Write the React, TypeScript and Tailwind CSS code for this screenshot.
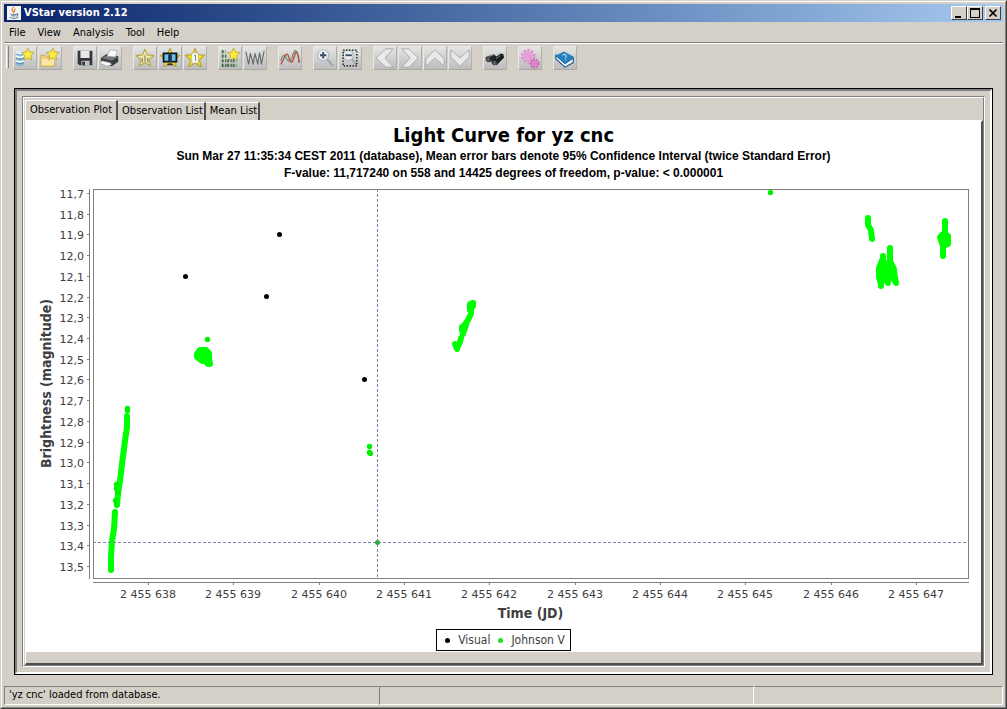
import { useState } from "react";
import type { ReactNode } from "react";

const STAR = "M12 1.5l3 6.800 7.500.700-5.600 5 1.700 7.500-6.600-4-6.600 4 1.700-7.500L1.500 9l7.500-.700z";

interface Tool {
  label: string;
  icon: ReactNode;
}

function Star({ x = 0, y = 0, size = 24, fill = "#fdee3c" }) {
  return (
    <svg x={x} y={y} width={size} height={size} viewBox="0 0 24 24">
      <path d={STAR} fill={fill} stroke="#b7a23a" strokeWidth="1.300" strokeLinejoin="round" />
    </svg>
  );
}

const toolGroups: Tool[][] = [
  [
    {
      label: "New star from database",
      icon: (
        <>
          <path d="M2 6h9v14q-4.500 2-9 0z" fill="#8fb9d2" />
          <ellipse cx="6.500" cy="6" rx="4.500" ry="1.800" fill="#dceef7" />
          <path d="M2 10q4.500 2.500 9 0M2 15q4.500 2.500 9 0" stroke="#f4fafd" strokeWidth="2" fill="none" />
          <path d="M2 12q4.500 2.500 9 0M2 17q4.500 2.500 9 0" stroke="#4e88ab" strokeWidth="1" fill="none" />
          <Star x={7} y={0} size={16} />
        </>
      ),
    },
    {
      label: "New star from file",
      icon: (
        <>
          <path d="M2 9h5l2 2h8v10H2z" fill="#f1cf79" stroke="#d5a94c" />
          <path d="M3 13h14l-1 7H3z" fill="#fbe6a6" />
          <Star x={7} y={0} size={16} />
        </>
      ),
    },
  ],
  [
    {
      label: "Save",
      icon: (
        <>
          <path d="M4 4h16v16H6l-2-2z" fill="#35353a" />
          <path d="M7 4h10v8H7z" fill="#e6e7ea" />
          <path d="M8 15h9v5H8z" fill="#bfc2c8" />
          <path d="M9 16h3v4H9z" fill="#35353a" />
        </>
      ),
    },
    {
      label: "Print",
      icon: (
        <>
          <path d="M2 12l6-4 13 2v6l-7 5-12-4z" fill="#3b3c40" />
          <path d="M3 12l6-3 11 2-6 4z" fill="#77787d" />
          <path d="M12 3l8 1-2 7-9-1z" fill="#fbfbfb" stroke="#9b9b9b" strokeWidth=".7" />
          <path d="M3 15l9 2 2 2-5 2-8-3z" fill="#f6f6f6" stroke="#777" strokeWidth=".5" />
        </>
      ),
    },
  ],
  [
    {
      label: "Raw data mode",
      icon: (
        <>
          <Star x={1} y={1} size={22} fill="#ece6b4" />
          <path d="M9 17v-5M12 16V9M15 17v-5" stroke="#8d8850" strokeWidth="1.300" />
        </>
      ),
    },
    {
      label: "Phase plot mode",
      icon: (
        <>
          <Star x={0} y={0} size={24} />
          <path d="M4 6h16v11H4z" fill="#10181f" />
          <path d="M6 8h12v7H6z" fill="#6fc0ee" />
          <path d="M10 15V9l2-2 2 2v6z" fill="#15334a" />
          <path d="M9 18h6v2H9z" fill="#333" />
        </>
      ),
    },
    {
      label: "Star info",
      icon: (
        <>
          <Star x={0} y={0} size={24} fill="#fbe800" />
          <path d="M8.500 6.500h7v11h-7z" fill="#fff" stroke="#aaa" strokeWidth=".7" />
          <path d="M11 9h1.500v6" stroke="#666" strokeWidth="1" fill="none" />
        </>
      ),
    },
  ],
  [
    {
      label: "Observation list",
      icon: (
        <>
          <path d="M3 5h4M3 10h6M3 15h16M3 20h16" stroke="#3f6b3d" strokeWidth="3.500" strokeDasharray="2 1.500 1.500 1" />
          <Star x={8} y={0} size={16} />
        </>
      ),
    },
    {
      label: "Light curve",
      icon: <path d="M2 5l3 14 2-12 3 12L12 7l3 12 2-13 2 13 3-15" stroke="#66686b" strokeWidth="1.200" fill="none" />,
    },
  ],
  [
    {
      label: "Polynomial fit",
      icon: (
        <>
          <path d="M2 15q3-10 6-3t6 0q3-11 5-7t3 12" stroke="#4f9e62" strokeWidth="1.300" fill="none" />
          <path d="M2 19q2-3 4-8t4-2q3 11 5 6t3-9q3-2 4 11" stroke="#c64141" strokeWidth="1.400" fill="none" />
        </>
      ),
    },
  ],
  [
    {
      label: "Zoom in",
      icon: (
        <>
          <path d="M14 13l7 8" stroke="#a0a2a7" strokeWidth="2" />
          <circle cx="10" cy="9" r="6" fill="#e8edf2" stroke="#b4b8be" strokeWidth="1.300" />
          <path d="M6.500 9h7M10 5.500v7" stroke="#3c4c5d" strokeWidth="2" />
        </>
      ),
    },
    {
      label: "Zoom to fit",
      icon: (
        <>
          <path d="M14 13l5 7" stroke="#a0a2a7" strokeWidth="2" />
          <circle cx="10" cy="9" r="5.500" fill="#e8edf2" stroke="#b4b8be" strokeWidth="1.300" />
          <path d="M7 9h7" stroke="#3c4c5d" strokeWidth="2" />
          <path d="M4.500 3.500h15v17h-15z" stroke="#000" strokeWidth="1.300" strokeDasharray="1.600 1.600" fill="none" />
        </>
      ),
    },
  ],
  [
    { label: "Pan left", icon: <path d="M13 2h8l-9 10 9 10h-8L2 12z" fill="#e9e9ea" stroke="#a6a6a8" /> },
    { label: "Pan right", icon: <path d="M11 2H3l9 10-9 10h8l10-10z" fill="#e9e9ea" stroke="#a6a6a8" /> },
    { label: "Pan up", icon: <path d="M2 13v8l10-9 10 9v-8L12 3z" fill="#e9e9ea" stroke="#a6a6a8" /> },
    { label: "Pan down", icon: <path d="M2 11V3l10 9 10-9v8l-10 10z" fill="#e9e9ea" stroke="#a6a6a8" /> },
  ],
  [
    {
      label: "Filter",
      icon: (
        <>
          <path d="M2 11l9-3 3 3-7 5-3 .5-2-2z" fill="#26272a" />
          <path d="M9 14l9-7 3 .5 1 4-8 8-4 .5-2-3z" fill="#1c1d1f" />
          <ellipse cx="4.500" cy="13.500" rx="2" ry="2.500" fill="#5a5c61" />
          <ellipse cx="11.500" cy="17.500" rx="2.500" ry="2.500" fill="#5a5c61" />
          <path d="M5 10.500l6-2M13 13l5-4" stroke="#808389" />
        </>
      ),
    },
  ],
  [
    {
      label: "Preferences",
      icon: (
        <>
          <circle cx="10" cy="10" r="6" fill="none" stroke="#e092d0" strokeWidth="4" strokeDasharray="2.400 1.400" />
          <circle cx="10" cy="10" r="5" fill="#e79fd8" />
          <circle cx="17" cy="18" r="4" fill="none" stroke="#cb5fb8" strokeWidth="3" strokeDasharray="1.800 1" />
          <circle cx="17" cy="18" r="3.500" fill="#dd82cb" />
        </>
      ),
    },
  ],
  [
    {
      label: "Help contents",
      icon: (
        <>
          <path d="M2 9l10 9 9-6v5l-9 5-10-9z" fill="#eef4f8" stroke="#1d5788" strokeWidth="1.200" />
          <path d="M2 9l9-4 11 6-10 7z" fill="#2581bd" />
          <path d="M9 9q3-2 4 0t-1 3M12 14h1" stroke="#a9d4ee" strokeWidth="1.300" fill="none" />
        </>
      ),
    },
  ],
];

// Plot geometry, measured from the top left corner of the plot area
const PLOT_W = 875;
const PLOT_H = 389;
const CROSS_X = 284;
const CROSS_Y = 353;

const magnitudes = Array.from({ length: 19 }, (_, i) => ({
  label: ((117 + i) / 10).toFixed(1).replace(".", ","),
  y: Math.round(4 + i * 20.72),
}));
const days = Array.from({ length: 10 }, (_, i) => ({
  label: `2 455 ${638 + i}`,
  x: Math.round(55 + i * 85.33),
}));

const visual = [[92, 87], [186, 45], [173, 107], [271, 190]];

const johnsonPoints = [
  [34, 219], [34, 221], [23, 295], [23, 299], [24, 303], [22, 311], [23, 315],
  [114, 150], [276, 257], [276, 263], [277, 264], [677, 3],
];

const johnsonRuns = [
  "34,227 34,238 32,252 29,275 27,292 25,305 24,316",
  "22,323 21,340 19,352 18,368 18,381",
  "380,114 378,118 378,125 375,131 371,137",
  "372,136 369,139 370,145",
  "368,149 367,153 364,159",
  "362,155 364,160",
  "775,29 775,36 778,41 779,50",
];

// Dense nights where the single dots run together
const johnsonBlobs = [
  "104,165 107,161 113,161 116,164 116,169 117,175 115,175 112,172 109,172 104,168",
  "377,115 380,114 380,117 377,121",
  "369,138 373,136 371,142 369,141",
  "786,79 790,69 791,80 797,72 799,76 801,80 802,92 798,85 795,92 793,84 788,95 786,88",
  "797,59 797,74",
  "790,67 790,80",
  "788,86 788,97",
  "795,84 795,94",
  "801,84 803,94",
  "847,48 850,45 855,47 855,55 850,57",
  "852,32 852,48",
  "850,53 850,67",
];

function LightCurve() {
  return (
    <svg viewBox="0 0 955 440" className="block w-full font-['DejaVu_Sans_Condensed','DejaVu_Sans',sans-serif]" role="img" aria-label="Light curve">
      <g transform="translate(67 6)">
        <rect x=".5" y=".5" width={PLOT_W} height={PLOT_H} fill="#fff" stroke="#808080" />
        <g stroke="#808080">
          <path d={`M-3.500 0V${PLOT_H + 1}M0 ${PLOT_H + 4.5}H${PLOT_W + 1}`} />
          {magnitudes.map((m) => (
            <path key={m.label} d={`M-6 ${m.y + 0.5}h3`} />
          ))}
          {days.map((d) => (
            <path key={d.label} d={`M${d.x + 0.5} ${PLOT_H + 4}v3`} />
          ))}
        </g>
        <g fill="#404040" className="font-['DejaVu_Sans',sans-serif] text-[11px]">
          {magnitudes.map((m) => (
            <text key={m.label} x="-9" y={m.y + 5} textAnchor="end">{m.label}</text>
          ))}
          {days.map((d) => (
            <text key={d.label} x={d.x} y={PLOT_H + 20} textAnchor="middle">{d.label}</text>
          ))}
        </g>
        <g fill="#404040" className="text-[14px] font-bold" textAnchor="middle">
          <text x={PLOT_W / 2} y={PLOT_H + 40}>Time (JD)</text>
          <text transform={`translate(-42 ${PLOT_H / 2}) rotate(-90)`}>Brightness (magnitude)</text>
        </g>
        <g fill="none" stroke="#00ff00" strokeWidth="6" strokeLinecap="round" strokeLinejoin="round">
          {johnsonRuns.map((run) => (
            <polyline key={run} points={run} />
          ))}
          {johnsonBlobs.map((blob) => (
            <polygon key={blob} points={blob} fill="#00ff00" />
          ))}
        </g>
        {johnsonPoints.map(([x, y]) => (
          <circle key={`${x}-${y}`} cx={x + 0.5} cy={y + 0.5} r="2.700" fill="#00f000" />
        ))}
        {visual.map(([x, y]) => (
          <circle key={`${x}-${y}`} cx={x + 0.5} cy={y + 0.5} r="2.500" fill="#000" />
        ))}
        <circle cx={CROSS_X + 0.5} cy={CROSS_Y + 0.5} r="2.500" fill="#10c010" />
        <path d={`M0 ${CROSS_Y + 0.5}H${PLOT_W}M${CROSS_X + 0.5} 0V${PLOT_H}`} stroke="#8080b8" strokeDasharray="3 2" />
      </g>
    </svg>
  );
}

function Legend() {
  return (
    <div className="flex h-[22px] items-center border border-black pr-[5px] pl-2 text-[12px] text-[#404040]">
      <span className="size-[5px] rounded-full bg-black" />
      <span className="mx-2">Visual</span>
      <span className="size-[5px] rounded-full bg-[#20e020]" />
      <span className="ml-2">Johnson V</span>
    </div>
  );
}

function TitleBar() {
  const button =
    "flex h-[14px] w-4 items-center justify-center border border-t-white border-l-white border-r-[#404040] border-b-[#404040] bg-[#d4d0c8]";
  return (
    <header className="flex h-[18px] items-center bg-linear-to-r from-[#0a246a] to-[#a6caf0] pl-[3px] pr-[2px]">
      <svg viewBox="0 0 16 16" className="size-[14px] bg-[#f4f3f1]">
        <path d="M8 1q-4 3-1 5 1 1 0 2M10 3q-3 2-1 4" stroke="#e0722c" strokeWidth="1.200" fill="none" />
        <path d="M4 9q4 1.500 7 0M5 11q3 1 5 0M3 13q5 2 10 0M11 9q3 0 0 3" stroke="#4d6f96" strokeWidth="1.200" fill="none" />
      </svg>
      <h1 className="ml-[3px] flex-1 text-[11px] leading-4 font-bold text-white">VStar version 2.12</h1>
      <button aria-label="Minimize" className={button}>
        <svg viewBox="0 0 12 12" className="size-3"><path d="M2 9h6v2H2z" /></svg>
      </button>
      <button aria-label="Maximize" className={button}>
        <svg viewBox="0 0 12 12" className="size-3"><path d="M1 1h10v10H1zM2 3v7h8V3z" fillRule="evenodd" /></svg>
      </button>
      <button aria-label="Close" className={`${button} ml-[2px]`}>
        <svg viewBox="0 0 12 12" className="size-3"><path d="M2.500 2.500l7 7M9.500 2.500l-7 7" stroke="#000" strokeWidth="1.700" /></svg>
      </button>
    </header>
  );
}

function Toolbar() {
  return (
    <div role="toolbar" className="flex items-start gap-[11px] border-t border-white pt-[2px] pl-[2px]">
      <span className="-mr-[7px] h-[22px] w-[3px] border-l border-r border-l-white border-r-[#808080]" />
      {toolGroups.map((group) => (
        <div key={group[0].label} className="flex gap-px">
          {group.map((tool) => (
            <button
              key={tool.label}
              aria-label={tool.label}
              className="size-6 border border-t-[#e8e8e6] border-l-[#e8e8e6] border-r-[#b2b0ab] border-b-[#a9a7a2] bg-linear-to-b from-[#e4e4e3] to-[#bdbdbd]"
            >
              <svg viewBox="0 0 24 24" className="size-full">{tool.icon}</svg>
            </button>
          ))}
        </div>
      ))}
    </div>
  );
}

const tabs = ["Observation Plot", "Observation List", "Mean List"];

export default function App() {
  const [tab, setTab] = useState(tabs[0]);

  return (
    <div className="flex min-h-screen flex-col border border-t-[#d4d0c8] border-l-[#d4d0c8] border-r-[#404040] border-b-[#404040] bg-[#d4d0c8] font-['DejaVu_Sans_Condensed','DejaVu_Sans',sans-serif] text-[11px] text-black">
      <div className="flex flex-1 flex-col border border-t-white border-l-white border-r-[#808080] border-b-[#808080] p-[2px]">
        <TitleBar />
        <nav className="flex h-[21px] items-center gap-3 border-b border-[#808080] pt-[2px] pl-[5px]">
          {["File", "View", "Analysis", "Tool", "Help"].map((item) => (
            <button key={item}>{item}</button>
          ))}
        </nav>
        <Toolbar />

        <main className="mx-[10px] mt-[18px] flex flex-1 flex-col border border-black">
          <div className="flex flex-1 flex-col border-2 border-t-[#808080] border-l-[#808080] border-r-white border-b-white p-[5px]">
            <div className="flex flex-1 flex-col border border-t-[#808080] border-l-[#808080] border-r-white border-b-white">
              <div className="flex flex-1 flex-col border border-t-white border-l-white border-r-[#808080] border-b-[#808080] pl-px">
                <div role="tablist" className="flex h-[22px] items-end">
                  {tabs.map((name) => (
                    <button
                      key={name}
                      role="tab"
                      aria-selected={tab === name}
                      onClick={() => setTab(name)}
                      className={
                        tab === name
                          ? "h-5 border-t border-r-2 border-l border-t-white border-l-white border-r-[#505050] px-1"
                          : "h-[18px] border-t border-r-2 border-t-white border-r-[#505050] pr-px pl-1"
                      }
                    >
                      {name}
                    </button>
                  ))}
                </div>
                <div className="flex-1 border-t-2 border-r-2 border-b-2 border-l border-t-white border-l-white border-r-[#505050] border-b-[#505050] pb-[11px]">
                  <section className="flex flex-col items-center bg-white pt-px pb-px">
                    <h2 className="text-[20px] leading-6 font-bold">Light Curve for yz cnc</h2>
                    <p className="mt-px text-center font-['Liberation_Sans',Arial,sans-serif] text-[12px] leading-[17px] font-bold">
                      Sun Mar 27 11:35:34 CEST 2011 (database), Mean error bars denote 95% Confidence Interval (twice Standard Error)
                      <br />
                      F-value: 11,717240 on 558 and 14425 degrees of freedom, p-value: &lt; 0.000001
                    </p>
                    <div className="mt-px w-full">
                      <LightCurve />
                    </div>
                    <div className="mt-[6px]">
                      <Legend />
                    </div>
                  </section>
                </div>
              </div>
            </div>
          </div>
        </main>

        <footer className="mt-[11px] grid h-[19px] grid-cols-[375fr_374fr_249fr]">
          <div className="border border-t-[#808080] border-l-[#808080] border-r-[#d4d0c8] border-b-white px-1 leading-4">
            'yz cnc' loaded from database.
          </div>
          <div className="border border-t-[#808080] border-l-[#808080] border-r-white border-b-white" />
          <div className="border border-t-[#808080] border-l-[#d4d0c8] border-r-white border-b-white" />
        </footer>
      </div>
    </div>
  );
}
